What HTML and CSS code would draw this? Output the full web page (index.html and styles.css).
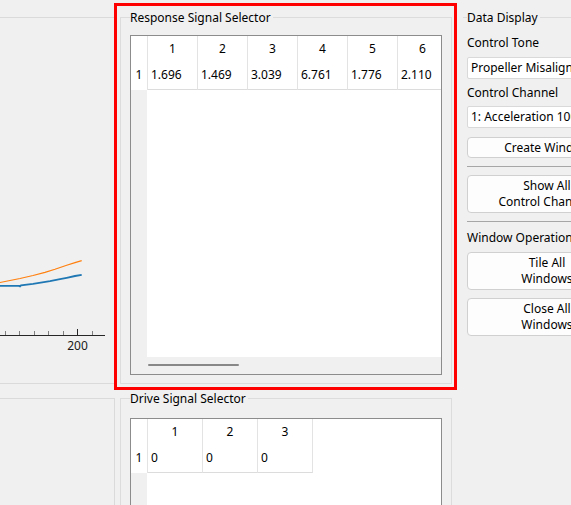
FILE: index.html
```html
<!DOCTYPE html>
<html>
<head>
<meta charset="utf-8">
<link rel="stylesheet" href="styles.css">
</head>
<body>
<div class="app">
  <div class="left">
    <div class="panel panel-plot">
      <svg class="plot" width="133" height="365" viewBox="-19 18 133 365">
        <polyline class="ln-orange" points="-19,286 0,282.5 10,280.5 20,278.5 33,275.5 45,272.3 55,269.3 66.7,265.2 75,262.6 81.7,260.6"/>
        <polyline class="ln-blue" points="-19,286.2 0,285.8 19,285.9 20,286.4 21,285.3 33,283.8 50,281.1 60,279.1 66.7,277.8 75,276 81.7,274.8"/>
        <line class="axis" x1="-19" y1="335.5" x2="105" y2="335.5"/>
        <line class="tick-minor" x1="5.5" y1="331" x2="5.5" y2="335"/>
        <line class="tick-minor" x1="19.5" y1="331" x2="19.5" y2="335"/>
        <line class="tick-minor" x1="34.5" y1="331" x2="34.5" y2="335"/>
        <line class="tick-minor" x1="48.5" y1="331" x2="48.5" y2="335"/>
        <line class="tick-minor" x1="63.5" y1="331" x2="63.5" y2="335"/>
        <line class="tick-major" x1="77.5" y1="329" x2="77.5" y2="335"/>
        <line class="tick-minor" x1="92.5" y1="331" x2="92.5" y2="335"/>
        <text class="tick-label" x="77.5" y="350" text-anchor="middle">200</text>
      </svg>
    </div>
    <div class="panel panel-low"></div>
  </div>

  <div class="middle">
    <fieldset class="group group1">
      <legend>Response Signal Selector</legend>
      <div class="uitable ut-resp">
        <div class="ut-row ut-hdr cols6">
          <div class="rh"></div><div>1</div><div>2</div><div>3</div><div>4</div><div>5</div><div>6</div>
        </div>
        <div class="ut-row ut-data cols6">
          <div class="rh">1</div><div>1.696</div><div>1.469</div><div>3.039</div><div>6.761</div><div>1.776</div><div>2.110</div>
        </div>
        <div class="ut-rest"><div class="rh-fill"></div></div>
        <div class="ut-hscroll"><div class="thumb"></div></div>
      </div>
    </fieldset>
    <fieldset class="group group2">
      <legend>Drive Signal Selector</legend>
      <div class="uitable ut-drive">
        <div class="ut-row ut-hdr cols3">
          <div class="rh"></div><div>1</div><div>2</div><div>3</div>
        </div>
        <div class="ut-row ut-data cols3">
          <div class="rh">1</div><div>0</div><div>0</div><div>0</div>
        </div>
        <div class="ut-rest"><div class="rh-fill"></div></div>
      </div>
    </fieldset>
  </div>

  <div class="right">
    <div class="flat-title"><span>Data Display</span></div>
    <div class="label l-tone">Control Tone</div>
    <div class="select s-tone">Propeller Misalignment</div>
    <div class="label l-chan">Control Channel</div>
    <div class="select s-chan">1: Acceleration 1001:+X</div>
    <button class="btn btn-create">Create Window</button>
    <div class="sep"></div>
    <button class="btn btn-two btn-show">Show All<br>Control Channels</button>
    <div class="sep"></div>
    <div class="label l-win">Window Operations</div>
    <button class="btn btn-two btn-tile">Tile All<br>Windows</button>
    <button class="btn btn-two btn-close">Close All<br>Windows</button>
  </div>
</div>
<div class="highlight"></div>
</body>
</html>
```

FILE: styles.css
```css
html, body {
  margin: 0;
  padding: 0;
}
body {
  background: #f0f0f0;
  font-family: "Noto Sans", "DejaVu Sans", sans-serif;
  font-size: 12px;
  line-height: 16px;
  color: #000;
  width: 571px;
  height: 505px;
  overflow: hidden;
  position: relative;
}
.app {
  display: flex;
  align-items: flex-start;
  padding-top: 9px;
}

/* left column */
.left {
  flex: none;
  width: 135px;
  margin-left: -20px;
  display: flex;
  flex-direction: column;
}
.panel {
  box-sizing: border-box;
  border: 1px solid #dadada;
}
.panel-plot {
  margin-top: 8px;
  height: 367px;
}
.panel-low {
  margin-top: 14px;
  height: 140px;
}
.plot {
  display: block;
}
.ln-orange {
  fill: none;
  stroke: #ff7f0e;
  stroke-width: 1.2;
}
.ln-blue {
  fill: none;
  stroke: #1f77b4;
  stroke-width: 1.8;
}
.axis {
  stroke: #262626;
  stroke-width: 1;
}
.tick-minor {
  stroke: #808080;
  stroke-width: 1;
}
.tick-major {
  stroke: #262626;
  stroke-width: 1;
}
.tick-label {
  font-family: "Noto Sans", "DejaVu Sans", sans-serif;
  font-size: 12px;
  fill: #1a1a1a;
}

/* middle column */
.middle {
  flex: none;
  width: 332px;
  margin-left: 5px;
  display: flex;
  flex-direction: column;
}
.group {
  margin: 0;
  min-width: 0;
  border: 1px solid #dcdcdc;
  padding: 9px 9px 8px 9px;
}
.group legend {
  padding: 0 2px 0 0;
  line-height: 17px;
}
.group2 {
  margin-top: 6px;
  padding-top: 11px;
}
.uitable {
  box-sizing: border-box;
  border: 1px solid #8c8c8c;
  background: #fff;
  display: flex;
  flex-direction: column;
  overflow: hidden;
}
.ut-resp {
  height: 340px;
}
.ut-drive {
  height: 160px;
}
.ut-row {
  display: grid;
  flex: none;
}
.cols6 {
  grid-template-columns: 17px repeat(6, 50px);
}
.cols3 {
  grid-template-columns: 17px repeat(3, 55px);
}
.ut-row > div {
  box-sizing: border-box;
  border-right: 1px solid #e3e3e3;
  white-space: nowrap;
  overflow: hidden;
}
.ut-hdr {
  height: 25px;
}
.ut-hdr > div {
  line-height: 25px;
  text-align: center;
}
.ut-data {
  height: 29px;
}
.ut-data > div {
  line-height: 28px;
  padding-left: 3px;
  border-bottom: 1px solid #dcdcdc;
}
.ut-data > .rh {
  padding-left: 0;
  text-align: center;
  border-bottom: none;
}
.ut-rest {
  flex: 1;
  display: flex;
}
.rh-fill {
  width: 16px;
  background: #f0f0f0;
}
.ut-hscroll {
  flex: none;
  height: 17px;
  background: #f0f0f0;
  overflow: hidden;
}
.thumb {
  margin: 7px 0 0 17px;
  width: 91px;
  height: 2px;
  border-radius: 1px;
  background: #888;
}

/* right column */
.right {
  flex: none;
  width: 170px;
  margin-left: 11px;
  display: flex;
  flex-direction: column;
  align-items: flex-start;
}
.flat-title {
  align-self: stretch;
  display: flex;
  align-items: center;
  height: 17px;
}
.flat-title::before {
  content: "";
  width: 4px;
  height: 1px;
  background: #dcdcdc;
}
.flat-title::after {
  content: "";
  flex: 1;
  height: 1px;
  margin-left: 2px;
  background: #dcdcdc;
}
.label {
  margin-left: 4px;
  height: 16px;
  white-space: nowrap;
}
.l-tone { margin-top: 9px; }
.l-chan { margin-top: 6px; }
.l-win { margin-top: 8px; }
.select {
  margin-left: 4px;
  box-sizing: border-box;
  width: 166px;
  height: 22px;
  border: 1px solid #d9d9d9;
  border-radius: 2px;
  background: #fff;
  padding-left: 3px;
  line-height: 20px;
  white-space: nowrap;
  overflow: hidden;
}
.s-tone { margin-top: 6px; }
.s-chan { margin-top: 5px; }
.btn {
  display: block;
  margin-left: 4px;
  box-sizing: border-box;
  width: 160px;
  padding: 0;
  border: 1px solid #d0d0d0;
  border-radius: 4px;
  background: #fdfdfd;
  color: #000;
  font: inherit;
  line-height: 16px;
  text-align: center;
}
.btn-create {
  margin-top: 9px;
  height: 21px;
}
.btn-two {
  height: 38px;
}
.btn-show { margin-top: 8px; }
.btn-tile { margin-top: 6px; }
.btn-close { margin-top: 8px; }
.sep {
  margin-top: 8px;
  margin-left: 4px;
  align-self: stretch;
  height: 1px;
  background: #a6a6a6;
}

.highlight {
  position: absolute;
  left: 114px;
  top: 3px;
  width: 343px;
  height: 387px;
  box-sizing: border-box;
  border: 3px solid #f00;
  pointer-events: none;
}
```
